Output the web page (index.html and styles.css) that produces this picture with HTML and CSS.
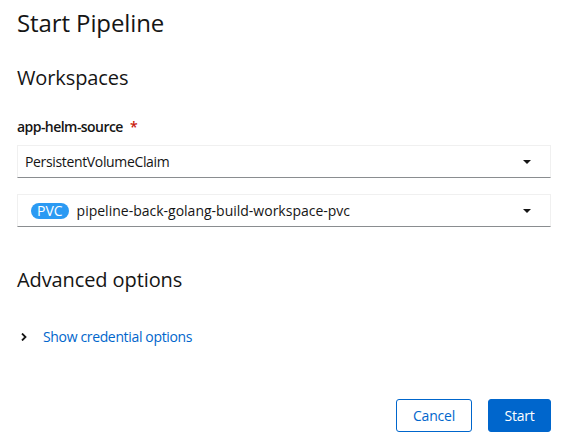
FILE: index.html
```html
<!DOCTYPE html>
<html>
<head>
<meta charset="utf-8">
<link rel="stylesheet" href="styles.css">
</head>
<body>
<div class="modal">
  <h1 class="title">Start Pipeline</h1>
  <h2 class="section">Workspaces</h2>
  <div class="field">
    <label class="label">app-helm-source <span class="req">*</span></label>
    <div class="select">
      <span class="select-text">PersistentVolumeClaim</span>
      <span class="caret"></span>
    </div>
    <div class="select second">
      <span class="select-text"><span class="badge">PVC</span><span class="pvc-name">pipeline-back-golang-build-workspace-pvc</span></span>
      <span class="caret"></span>
    </div>
  </div>
  <h2 class="section adv">Advanced options</h2>
  <div class="expand">
    <svg class="chev" width="6" height="8" viewBox="0 0 6 8"><path d="M1 0.5 L4.5 4 L1 7.5" fill="none" stroke="#151515" stroke-width="1.8"/></svg>
    <a class="link">Show credential options</a>
  </div>
  <div class="footer">
    <button class="btn secondary">Cancel</button>
    <button class="btn primary">Start</button>
  </div>
</div>
</body>
</html>
```
FILE: styles.css
```css
html, body { margin: 0; padding: 0; background: #fff; }
body { font-family: "Open Sans", "Noto Sans", sans-serif; color: #151515; }
.modal { padding: 0 19px 0 17px; width: 534px; }
.title { font-size: 24px; font-weight: 400; line-height: 29px; margin: 0; padding-top: 8px; letter-spacing: -0.1px; }
.section { font-size: 20px; font-weight: 400; line-height: 24px; margin: 29px 0 0; letter-spacing: -0.1px; }
.field { margin-top: 27px; }
.label { display: block; font-size: 14px; font-weight: 600; line-height: 20px; letter-spacing: -0.55px; }
.req { color: #c9190b; margin-left: 4px; }
.select { margin-top: 8px; height: 31px; border: 1px solid #f0f0f0; border-bottom-color: #8a8d90; display: flex; align-items: center; justify-content: space-between; padding: 0 19px 0 7px; font-size: 14px; letter-spacing: -0.35px; }
.select.second { margin-top: 16px; padding-left: 13px; }
.select-text { display: flex; align-items: center; }
.pvc-name { letter-spacing: 0; }
.badge { background: #2b9af3; color: #fff; border-radius: 9px; padding: 0 6px; line-height: 16px; height: 16px; font-size: 14px; letter-spacing: 0; margin-right: 8px; }
.caret { width: 0; height: 0; border-left: 4px solid transparent; border-right: 4px solid transparent; border-top: 4px solid #151515; }
.adv { margin-top: 41px; }
.expand { display: flex; align-items: center; margin-top: 35px; padding-left: 4px; font-size: 14px; line-height: 20px; letter-spacing: -0.35px; }
.chev { margin-right: 16px; }
.link { color: #06c; }
.footer { display: flex; justify-content: flex-end; gap: 16px; margin-top: 52px; }
.btn { font-family: inherit; font-size: 14px; height: 33px; border-radius: 3px; padding: 0 10px; line-height: 20px; letter-spacing: -0.2px; }
.secondary { background: #fff; border: 1px solid #06c; color: #06c; width: 76px; }
.primary { background: #06c; border: 1px solid #06c; color: #fff; width: 63px; }
```
